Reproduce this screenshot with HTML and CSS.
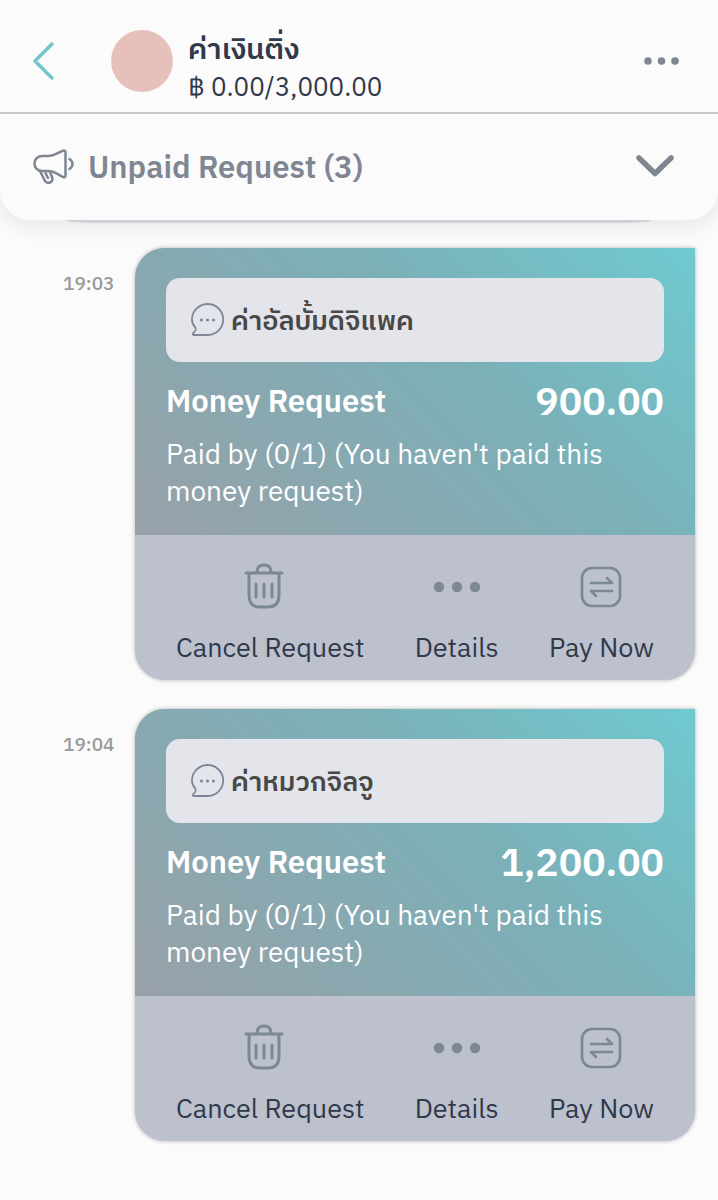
FILE: index.html
```
<!DOCTYPE html>
<html lang="th">

<head>
    <meta charset="UTF-8">
    <meta name="viewport" content="width=device-width, initial-scale=1.0">
    <title>ค่าเงินติ่ง</title>
    <link rel="stylesheet" href="styles.css">
</head>

<body>
    <header class="topbar">
        <button class="back" type="button" aria-label="Back">
            <svg width="24" height="40" viewBox="0 0 24 40" fill="none" stroke="#70c6cb" stroke-width="3.400" stroke-linecap="round" stroke-linejoin="round">
                <path d="M20 3 L3 20 L20 37" />
            </svg>
        </button>
        <div class="avatar"></div>
        <div class="group">
            <h1 class="group-name">ค่าเงินติ่ง</h1>
            <p class="group-total">฿ 0.00/3,000.00</p>
        </div>
        <button class="more" type="button" aria-label="More">
            <svg width="36" height="8" viewBox="0 0 36 8" fill="#7f8692">
                <circle cx="5" cy="4" r="3.800" />
                <circle cx="18.500" cy="4" r="3.800" />
                <circle cx="32" cy="4" r="3.800" />
            </svg>
        </button>
    </header>

    <button class="unpaid" type="button">
        <svg width="42" height="36" viewBox="0 0 42 36" fill="none" stroke="#7f8692" stroke-width="2.500" stroke-linecap="round" stroke-linejoin="round">
            <path d="M9 7 H15 C21 7 26 3 30 1.700 Q32.500 1 32.500 3.500 V26 Q32.500 29 30 28 C26 26 21 22 15 22 H9 C4 22 1.500 18 1.500 14.500 C1.500 11 4 7 9 7 Z" />
            <path d="M7 22 L12 32 Q15 35.500 18.500 32.500 Q20 31 19 28 L17 23 M12.500 24 L15 29" />
            <path d="M36.500 10 Q39.500 12 39.500 15 Q39.500 18 36.500 20" />
        </svg>
        <span class="unpaid-text">Unpaid Request (3)</span>
        <svg width="40" height="24" viewBox="0 0 40 24" fill="none" stroke="#7f8692" stroke-width="5.500" stroke-linecap="round" stroke-linejoin="round">
            <path d="M4 3 L20 18.500 L36 3" />
        </svg>
    </button>

    <main class="chat">
        <div class="card-end"></div>

        <section class="message">
            <time class="time">19:03</time>
            <article class="card">
                <div class="card-info">
                    <div class="note">
                        <svg width="34" height="34" viewBox="0 0 34 34" fill="none" stroke="#7f8699" stroke-width="1.800" stroke-linejoin="round">
                            <path d="M17 32 H3 Q1 32 2 30.500 C4 28.500 6 27 4 24 C2 22 1 20 1 17 A15.600 15.500 0 1 1 17 32 Z" />
                            <g fill="#7f8699" stroke="none">
                                <circle cx="10.500" cy="17" r="1.600" />
                                <circle cx="16.500" cy="17" r="1.600" />
                                <circle cx="22.500" cy="17" r="1.600" />
                            </g>
                        </svg>
                        <span class="note-text">ค่าอัลบั้มดิจิแพค</span>
                    </div>
                    <div class="request">
                        <h2 class="request-title">Money Request</h2>
                        <strong class="amount">900.00</strong>
                    </div>
                    <p class="paid">Paid by (0/1) (You haven't paid this money request)</p>
                </div>
                <div class="actions">
                    <button class="action" type="button">
                        <svg width="52" height="48" viewBox="0 0 52 48" fill="none" stroke="#7d8992" stroke-width="3" stroke-linecap="round" stroke-linejoin="round">
                            <path d="M2 11 H38 M5 11 V33 Q5 45 16 45 H24 Q35 45 35 33 V11 M13 10 Q13 3 20 3 Q27 3 27 10" />
                            <path d="M12 22 V35 M20 22 V35 M28 22 V35" />
                        </svg>
                        <span>Cancel Request</span>
                    </button>
                    <button class="action" type="button">
                        <svg width="48" height="48" viewBox="0 0 48 48" fill="#7d8992">
                            <circle cx="6" cy="25" r="5.200" />
                            <circle cx="24" cy="25" r="5.200" />
                            <circle cx="42" cy="25" r="5.200" />
                        </svg>
                        <span>Details</span>
                    </button>
                    <button class="action" type="button">
                        <svg width="42" height="48" viewBox="0 0 42 48" fill="none" stroke="#7d8992" stroke-width="2.700" stroke-linecap="round" stroke-linejoin="round">
                            <rect x="2" y="6" width="38" height="38" rx="10" />
                            <path d="M11 21 H32 L27 16 M32 29 H11 L16 34" />
                        </svg>
                        <span>Pay Now</span>
                    </button>
                </div>
            </article>
        </section>

        <section class="message">
            <time class="time">19:04</time>
            <article class="card">
                <div class="card-info">
                    <div class="note">
                        <svg width="34" height="34" viewBox="0 0 34 34" fill="none" stroke="#7f8699" stroke-width="1.800" stroke-linejoin="round">
                            <path d="M17 32 H3 Q1 32 2 30.500 C4 28.500 6 27 4 24 C2 22 1 20 1 17 A15.600 15.500 0 1 1 17 32 Z" />
                            <g fill="#7f8699" stroke="none">
                                <circle cx="10.500" cy="17" r="1.600" />
                                <circle cx="16.500" cy="17" r="1.600" />
                                <circle cx="22.500" cy="17" r="1.600" />
                            </g>
                        </svg>
                        <span class="note-text">ค่าหมวกจิลจู</span>
                    </div>
                    <div class="request">
                        <h2 class="request-title">Money Request</h2>
                        <strong class="amount">1,200.00</strong>
                    </div>
                    <p class="paid">Paid by (0/1) (You haven't paid this money request)</p>
                </div>
                <div class="actions">
                    <button class="action" type="button">
                        <svg width="52" height="48" viewBox="0 0 52 48" fill="none" stroke="#7d8992" stroke-width="3" stroke-linecap="round" stroke-linejoin="round">
                            <path d="M2 11 H38 M5 11 V33 Q5 45 16 45 H24 Q35 45 35 33 V11 M13 10 Q13 3 20 3 Q27 3 27 10" />
                            <path d="M12 22 V35 M20 22 V35 M28 22 V35" />
                        </svg>
                        <span>Cancel Request</span>
                    </button>
                    <button class="action" type="button">
                        <svg width="48" height="48" viewBox="0 0 48 48" fill="#7d8992">
                            <circle cx="6" cy="25" r="5.200" />
                            <circle cx="24" cy="25" r="5.200" />
                            <circle cx="42" cy="25" r="5.200" />
                        </svg>
                        <span>Details</span>
                    </button>
                    <button class="action" type="button">
                        <svg width="42" height="48" viewBox="0 0 42 48" fill="none" stroke="#7d8992" stroke-width="2.700" stroke-linecap="round" stroke-linejoin="round">
                            <rect x="2" y="6" width="38" height="38" rx="10" />
                            <path d="M11 21 H32 L27 16 M32 29 H11 L16 34" />
                        </svg>
                        <span>Pay Now</span>
                    </button>
                </div>
            </article>
        </section>
    </main>
</body>

</html>
```
FILE: styles.css
```
* {
    box-sizing: border-box;
}

body {
    margin: 0;
    background: #fbfbfb;
    color: #30394a;
    font-family: "IBM Plex Sans", "IBM Plex Sans Thai", "Noto Sans", "Noto Sans Thai", sans-serif;
}

h1,
h2,
p {
    margin: 0;
}

button {
    padding: 0;
    border: 0;
    background: none;
    color: inherit;
    font: inherit;
    cursor: pointer;
}

svg {
    display: block;
    flex: none;
}

/* group header */
.topbar {
    position: relative;
    z-index: 1;
    display: flex;
    align-items: center;
    height: 114px;
    padding: 10px 39px 0 32px;
    border-bottom: 2px solid #c6cac9;
    background: #fbfbfb;
}

.avatar {
    width: 62px;
    height: 62px;
    margin: 0 15px 0 55px;
    border-radius: 50%;
    background: #e6c1bc;
}

.group {
    flex: 1;
    padding-top: 12px;
}

.group-name {
    font-size: 29px;
    font-weight: 600;
    line-height: 38px;
}

.group-total {
    font-size: 26px;
    line-height: 38px;
}

/* unpaid banner */
.unpaid {
    position: relative;
    display: flex;
    align-items: center;
    gap: 13px;
    width: 100%;
    height: 106px;
    padding: 0 43px 0 33px;
    border-radius: 0 0 30px 30px;
    background: #fbfbfb;
    box-shadow: 0 4px 24px rgba(0, 0, 0, 0.1);
    color: #7f8692;
}

.unpaid-text {
    flex: 1;
    font-size: 31px;
    font-weight: 600;
    line-height: 38px;
    text-align: left;
}

/* messages */
.chat {
    display: flex;
    flex-direction: column;
    gap: 29px;
    padding: 0 23px 59px 63px;
}

.card-end {
    height: 3px;
    margin: 0 43px -4px 3px;
    border-radius: 0 0 30px 30px / 0 0 3px 3px;
    background: #dcdee5;
}

.message {
    display: flex;
    align-items: flex-start;
    gap: 22px;
}

.time {
    width: 50px;
    padding-top: 23px;
    color: #999;
    font-size: 19px;
    font-weight: 500;
    line-height: 24px;
    text-align: right;
}

.card {
    flex: 1;
    overflow: hidden;
    border-radius: 30px 0 30px 30px;
    background: #bdc0cd;
    box-shadow: 0 0 4px rgba(0, 0, 0, 0.3);
}

.card-info {
    padding: 30px 31px 26px;
    background: linear-gradient(45deg, #98a0a8, #7bb0b8 60%, #6fcad0);
    color: #fff;
}

.note {
    display: flex;
    align-items: center;
    gap: 6px;
    height: 84px;
    padding: 0 25px;
    border-radius: 14px;
    background: #e4e5eb;
    color: #484848;
    font-size: 27px;
    font-weight: 600;
}

.note-text {
    padding-top: 4px;
}

.request {
    display: flex;
    align-items: center;
    justify-content: space-between;
    height: 73px;
    padding-top: 4px;
}

.request-title {
    font-size: 31px;
    font-weight: 600;
}

.amount {
    font-size: 39px;
    font-weight: 600;
}

.paid {
    font-size: 28px;
    line-height: 37px;
}

.actions {
    display: flex;
    justify-content: space-between;
    padding: 27px 41px 15px;
}

.action {
    display: flex;
    flex-direction: column;
    align-items: center;
    gap: 19px;
    font-size: 27px;
    line-height: 36px;
}
```
